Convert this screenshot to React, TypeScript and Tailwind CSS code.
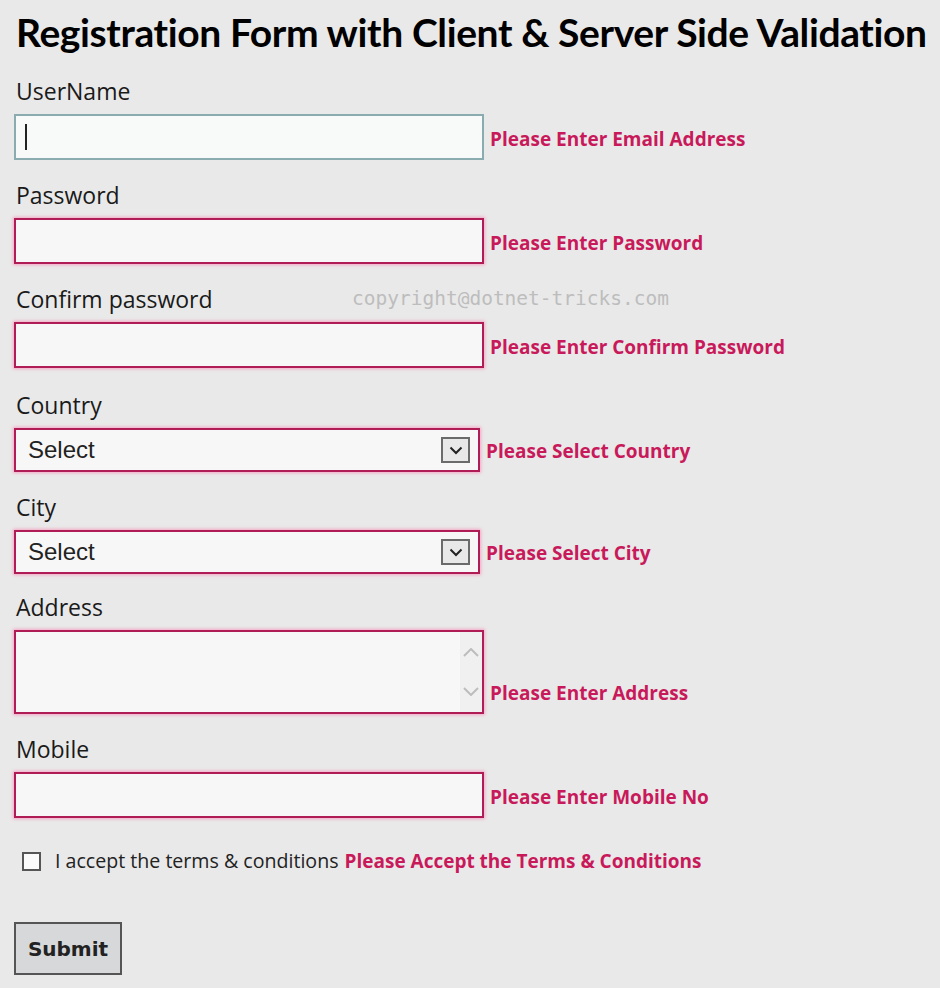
import React from "react"

const errCls = "font-['Open_Sans',sans-serif] font-bold text-[19px] leading-[26px] text-[#c8195a] whitespace-nowrap"
const labelCls = "font-['Open_Sans',sans-serif] text-[23px] text-[#1a1a1a] leading-[23px] h-[23px]"
const boxErr = "border-2 border-[#b01c55] shadow-[0_0_3px_1px_#f4a6c4] bg-[#f7f7f7]"

function Field({ label, error, mt, children }: { label: string; error: string; mt: string; children: React.ReactNode }) {
  return (
    <div className={mt}>
      <div className={`${labelCls} pl-[2px]`}>{label}</div>
      <div className="flex items-end mt-[11px]">
        {children}
        <span className={`${errCls} ml-[6px] mb-[8px]`}>{error}</span>
      </div>
    </div>
  )
}

function TextBox({ focused }: { focused?: boolean }) {
  return (
    <div
      className={
        "w-[470px] h-[46px] flex items-center pl-[9px] " +
        (focused ? "border-2 border-[#8aabb0] bg-[#f8f9f9]" : boxErr)
      }
    >
      {focused && <div className="w-[2px] h-[26px] bg-[#222]" />}
    </div>
  )
}

function SelectBox() {
  return (
    <div className={`w-[466px] h-[44px] flex items-center justify-between pl-[12px] pr-[8px] ${boxErr}`}>
      <span className="font-['Liberation_Sans',sans-serif] text-[24px] text-[#222]">Select</span>
      <div className="w-[29px] h-[26px] border-2 border-[#6b6b6b] bg-[#e8e8e8] flex items-center justify-center">
        <svg width="14" height="9" viewBox="0 0 14 9">
          <path d="M1.5 1.5 L7 7 L12.5 1.5" fill="none" stroke="#222" strokeWidth="2" />
        </svg>
      </div>
    </div>
  )
}

export default function App() {
  return (
    <div className="relative min-h-screen bg-[#e9e9e9] pl-[14px] pt-[9px] pb-[12px]">
      <h1 className="font-['Lato',sans-serif] font-bold text-[39px] leading-[46px] text-black whitespace-nowrap pl-[2px] tracking-[-0.38px]">
        Registration Form with Client &amp; Server Side Validation
      </h1>

      <div className="absolute left-[352px] top-[284px] font-['DejaVu_Sans_Mono',monospace] text-[19.5px] text-[#bdbdbd] whitespace-nowrap">
        copyright@dotnet-tricks.com
      </div>

      <Field label="UserName" error="Please Enter Email Address" mt="mt-[25px]">
        <TextBox focused />
      </Field>
      <Field label="Password" error="Please Enter Password" mt="mt-[24px]">
        <TextBox />
      </Field>
      <Field label="Confirm password" error="Please Enter Confirm Password" mt="mt-[24px]">
        <TextBox />
      </Field>
      <Field label="Country" error="Please Select Country" mt="mt-[26px]">
        <SelectBox />
      </Field>
      <Field label="City" error="Please Select City" mt="mt-[24px]">
        <SelectBox />
      </Field>
      <Field label="Address" error="Please Enter Address" mt="mt-[22px]">
        <div className={`w-[470px] h-[84px] flex justify-end ${boxErr}`}>
          <div className="w-[22px] h-full bg-[#f0f0f0] flex flex-col items-center justify-between py-[16px]">
            <svg width="16" height="9" viewBox="0 0 16 9">
              <path d="M1 8 L8 1 L15 8" fill="none" stroke="#bdbdbd" strokeWidth="2" />
            </svg>
            <svg width="16" height="9" viewBox="0 0 16 9">
              <path d="M1 1 L8 8 L15 1" fill="none" stroke="#bdbdbd" strokeWidth="2" />
            </svg>
          </div>
        </div>
      </Field>
      <Field label="Mobile" error="Please Enter Mobile No" mt="mt-[24px]">
        <TextBox />
      </Field>

      <div className="flex items-center h-[20px] mt-[33px] pl-[8px]">
        <div className="w-[19px] h-[19px] border-2 border-[#555] bg-[#fafafa]" />
        <span className="ml-[14px] font-['Open_Sans',sans-serif] text-[19.6px] text-[#222] whitespace-nowrap">
          I accept the terms &amp; conditions
        </span>
        <span className={`${errCls} ml-[6px]`}>Please Accept the Terms &amp; Conditions</span>
      </div>

      <button className="block mt-[51px] w-[108px] h-[53px] border-2 border-[#555] bg-[#d6d8da] font-['DejaVu_Sans',sans-serif] font-bold text-[20px] text-[#222]">
        Submit
      </button>
    </div>
  )
}
